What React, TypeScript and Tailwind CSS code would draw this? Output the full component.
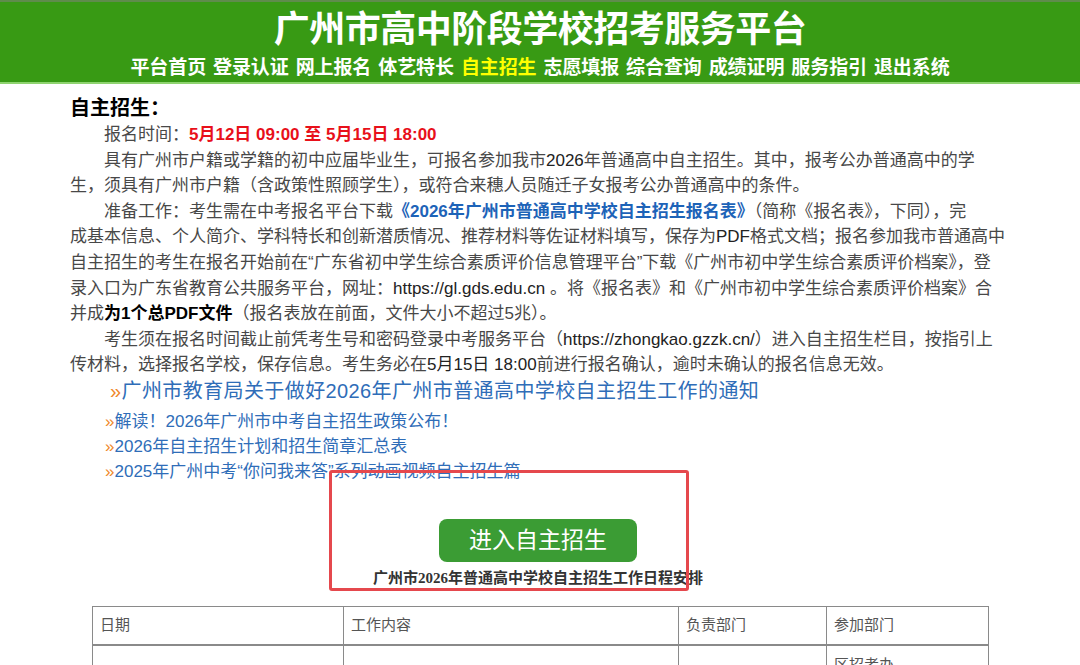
import React from 'react';

const navItems = ['平台首页', '登录认证', '网上报名', '体艺特长', '自主招生', '志愿填报', '综合查询', '成绩证明', '服务指引', '退出系统'];

const subLinks = [
  '解读！2026年广州市中考自主招生政策公布！',
  '2026年自主招生计划和招生简章汇总表',
  '2025年广州中考“你问我来答”系列动画视频自主招生篇',
];

export default function App() {
  return (
    <div className="relative min-h-screen bg-white font-['Liberation_Sans','Noto_Sans_CJK_SC',sans-serif]">
      <header className="h-[84px] bg-[#389a14] border-t-2 border-t-[#5f8c4c] border-b-2 border-b-[#8fd470] flex flex-col items-center">
        <h1 className="mt-[8px] text-[36px] leading-[40px] font-bold text-white tracking-[-0.5px]">广州市高中阶段学校招考服务平台</h1>
        <nav className="mt-[6px] flex gap-[7px] text-[19px] leading-[24px] font-bold text-white tracking-[-0.1px]">
          {navItems.map((item) => (
            <a key={item} href="#" className={item === '自主招生' ? 'text-[#ffff00]' : 'text-white'}>
              {item}
            </a>
          ))}
        </nav>
      </header>

      <main className="px-[70px] pt-[11px]">
        <h2 className="text-[20px] leading-[26px] font-bold text-black">自主招生：</h2>

        <div className="mt-[1px] text-[17px] leading-[25.6px] text-[#484848] whitespace-nowrap">
          <div className="pl-[34px]">
            报名时间：<span className="font-bold text-[#e8101a]">5月12日 09:00 至 5月15日 18:00</span>
          </div>
          <div className="pl-[34px]">具有广州市户籍或学籍的初中应届毕业生，可报名参加我市<span className="text-[#222]">2026</span>年普通高中自主招生。其中，报考公办普通高中的学</div>
          <div>生，须具有广州市户籍（含政策性照顾学生），或符合来穗人员随迁子女报考公办普通高中的条件。</div>
          <div className="pl-[34px]">
            准备工作：考生需在中考报名平台下载<span className="font-bold text-[#1d63b8]">《2026年广州市普通高中学校自主招生报名表》</span>（简称《报名表》，下同），完
          </div>
          <div>成基本信息、个人简介、学科特长和创新潜质情况、推荐材料等佐证材料填写，保存为<span className="text-[#222]">PDF</span>格式文档；报名参加我市普通高中</div>
          <div>自主招生的考生在报名开始前在“广东省初中学生综合素质评价信息管理平台”下载《广州市初中学生综合素质评价档案》，登</div>
          <div>录入口为广东省教育公共服务平台，网址：<span className="text-[#222]">https://gl.gds.edu.cn</span> 。将《报名表》和《广州市初中学生综合素质评价档案》合</div>
          <div>
            并成<span className="font-bold text-black">为1个总PDF文件</span>（报名表放在前面，文件大小不超过5兆）。
          </div>
          <div className="pl-[34px]">考生须在报名时间截止前凭考生号和密码登录中考服务平台（<span className="text-[#222]">https://zhongkao.gzzk.cn/</span>）进入自主招生栏目，按指引上</div>
          <div>传材料，选择报名学校，保存信息。考生务必在<span className="text-[#222]">5月15日 18:00</span>前进行报名确认，逾时未确认的报名信息无效。</div>
        </div>

        <a href="#" className="block pl-[40px] text-[20px] leading-[26px] text-[#2f6db8] whitespace-nowrap tracking-[0.4px]">
          <span className="text-[#f0882a]">»</span>广州市教育局关于做好2026年广州市普通高中学校自主招生工作的通知
        </a>
        <div className="mt-[5px] pl-[35px]">
          {subLinks.map((t) => (
            <a key={t} href="#" className="block text-[17px] leading-[25px] text-[#2f6db8] whitespace-nowrap">
              <span className="text-[#f0882a]">»</span>{t}
            </a>
          ))}
        </div>

        <div className="mt-[35px] flex flex-col items-center">
          <button className="w-[198px] h-[43px] rounded-[8px] bg-[#3b9c34] text-white text-[23px] leading-[43px] -ml-[4px]">
            进入自主招生
          </button>
          <p className="mt-[7px] text-[15px] leading-[18px] font-bold text-[#333] font-['Liberation_Serif','Noto_Sans_CJK_SC',serif] -ml-[4px]">
            广州市2026年普通高中学校自主招生工作日程安排
          </p>
        </div>

        <table className="mt-[19px] ml-[22px] w-[896px] border-collapse text-[15px] text-[#555] table-fixed">
          <colgroup>
            <col className="w-[251px]" />
            <col className="w-[335px]" />
            <col className="w-[148px]" />
            <col className="w-[162px]" />
          </colgroup>
          <thead>
            <tr className="h-[39px]">
              <th className="border border-[#8a8a8a] border-b-2 px-[7px] text-left font-normal">日期</th>
              <th className="border border-[#8a8a8a] border-b-2 px-[7px] text-left font-normal">工作内容</th>
              <th className="border border-[#8a8a8a] border-b-2 px-[7px] text-left font-normal">负责部门</th>
              <th className="border border-[#8a8a8a] border-b-2 px-[7px] text-left font-normal">参加部门</th>
            </tr>
          </thead>
          <tbody>
            <tr className="h-[90px]">
              <td className="border border-[#8a8a8a] px-[7px] align-top"></td>
              <td className="border border-[#8a8a8a] px-[7px] align-top"></td>
              <td className="border border-[#8a8a8a] px-[7px] align-top"></td>
              <td className="border border-[#8a8a8a] px-[7px] pt-[8px] align-top leading-[22px]">区招考办、<br />学校</td>
            </tr>
          </tbody>
        </table>
      </main>

      <div className="absolute left-[329px] top-[470px] w-[360px] h-[121px] border-[3px] border-[#e5484d] rounded-[3px] pointer-events-none" />
    </div>
  );
}
